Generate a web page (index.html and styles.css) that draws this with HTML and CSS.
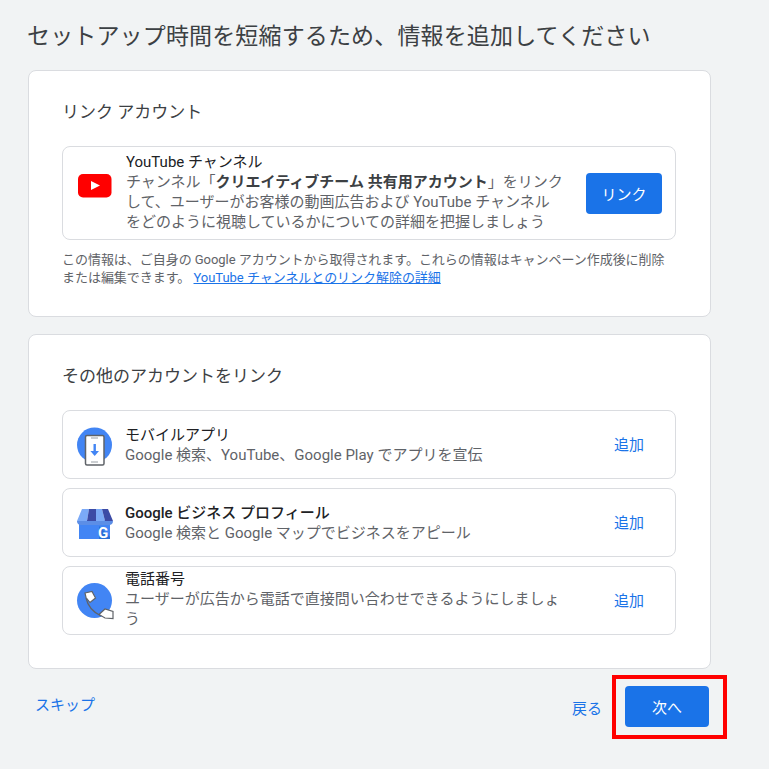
FILE: index.html
```html
<!DOCTYPE html>
<html lang="ja">
<head>
<meta charset="utf-8">
<title>セットアップ</title>
<link rel="stylesheet" href="styles.css">
</head>
<body>
<main class="page">
  <h1 class="title">セットアップ時間を短縮するため、情報を追加してください</h1>
  <section class="card card-first">
    <h2 class="card-title">リンク アカウント</h2>
    <div class="row row-yt">
      <svg class="icon-yt" viewBox="0 0 34 24" width="34" height="24"><rect x="0" y="0" width="33.500" height="23.500" rx="5" fill="#f00"/><path fill="#fff" d="M13 7l9 4.500-9 4.500z"/></svg>
      <div class="row-text">
        <div class="row-name">YouTube チャンネル</div>
        <div class="row-desc">チャンネル「<b>クリエイティブチーム 共有用アカウント</b>」をリンクして、ユーザーがお客様の動画広告および YouTube チャンネルをどのように視聴しているかについての詳細を把握しましょう</div>
      </div>
      <button class="btn btn-link">リンク</button>
    </div>
    <p class="note">この情報は、ご自身の Google アカウントから取得されます。これらの情報はキャンペーン作成後に削除または編集できます。 <a href="#">YouTube チャンネルとのリンク解除の詳細</a></p>
  </section>
  <section class="card card-second">
    <h2 class="card-title">その他のアカウントをリンク</h2>
    <div class="rows">
      <div class="row">
        <svg class="icon" viewBox="0 -2 46 46" width="46" height="46"><circle cx="22.500" cy="21" r="17.500" fill="#4285f4"/><rect x="13.500" y="11.500" width="18.500" height="29.500" rx="1.500" fill="#fff" stroke="#5f6368" stroke-width="1.500"/><path d="M19 14h7M19 38h7" stroke="#9aa0a6" stroke-width="1.200"/><path fill="#4285f4" d="M21.500 20h2.400v7h3.100l-4.300 5-4.300-5h3.100z"/></svg>
        <div class="row-text"><div class="row-name">モバイルアプリ</div><div class="row-desc">Google 検索、YouTube、Google Play でアプリを宣伝</div></div>
        <a class="add" href="#">追加</a>
      </div>
      <div class="row">
        <svg class="icon" viewBox="0 -2 46 46" width="46" height="46"><path fill="#4285f4" d="M7 18h31v19H7z"/><path fill="#2a6fd6" d="M27 24l11 11v2H27z"/><path fill="#7baaf7" d="M10 7h7l-2 12H5z"/><path fill="#3c4ba6" d="M17 7h7v12h-9z"/><path fill="#7baaf7" d="M24 7h6l3 12h-9z"/><path fill="#3c4ba6" d="M30 7h6l5 12h-8z"/><path fill="#5c8ee6" d="M5 19h36c0 2.500-1.500 4-4 4H9c-2.500 0-4-1.500-4-4z"/><text class="g-mark" x="31" y="36">G</text></svg>
        <div class="row-text"><div class="row-name name-strong">Google ビジネス プロフィール</div><div class="row-desc">Google 検索と Google マップでビジネスをアピール</div></div>
        <a class="add" href="#">追加</a>
      </div>
      <div class="row">
        <svg class="icon" viewBox="0 0 46 46" width="46" height="46"><circle cx="22.500" cy="22.500" r="17.500" fill="#4285f4"/><path fill="none" stroke="#5f6368" stroke-width="1.200" d="M14 20c1.500 7 7 14 15 18"/><path fill="#fff" stroke="#5f6368" stroke-width="1.200" d="M13 15l7-1.500 3.500 6.500-5.500 4.500-4-5zM27 36.500l6-5.500 8 2.500v7l-8-.5z"/></svg>
        <div class="row-text row-text-long"><div class="row-name">電話番号</div><div class="row-desc">ユーザーが広告から電話で直接問い合わせできるようにしましょう</div></div>
        <a class="add" href="#">追加</a>
      </div>
    </div>
  </section>
  <footer class="footer">
    <a class="skip" href="#">スキップ</a>
    <div class="footer-right">
      <a class="back" href="#">戻る</a>
      <div class="highlight"><button class="btn btn-next">次へ</button></div>
    </div>
  </footer>
</main>
</body>
</html>
```

FILE: styles.css
```css
* { box-sizing: border-box; }
html, body { margin: 0; height: 100%; }
body {
  background: #f1f3f4;
  font-family: "Roboto", "Noto Sans CJK JP", sans-serif;
  color: #3c4043;
  overflow: hidden;
}
.page { width: 769px; padding: 22px 58px 0 28px; }
.title {
  margin: 0 0 18px -1px;
  font-size: 23px;
  letter-spacing: .15px;
  line-height: 30px;
  font-weight: 400;
  color: #3c4043;
  white-space: nowrap;
}
.card {
  background: #fff;
  border: 1px solid #dadce0;
  border-radius: 8px;
  padding: 0 34px 0 33px;
}
.card-first { height: 247px; padding-top: 29px; margin-bottom: 17px; }
.card-second { height: 335px; padding-top: 29px; }
.card-title {
  margin: 0;
  font-size: 17px;
  line-height: 24px;
  font-weight: 400;
  color: #3c4043;
}
.card-first .card-title { margin-bottom: 22px; }
.card-second .card-title { margin-bottom: 22px; }
.rows { display: flex; flex-direction: column; gap: 9px; }
.row {
  display: flex;
  align-items: center;
  height: 69px;
  border: 1px solid #dadce0;
  border-radius: 8px;
  padding: 0 14px;
}
.row-yt { height: 94px; padding-right: 13px; }
.icon { flex: none; margin: 1px 7px 0 -5px; }
.icon-yt { flex: none; margin: -14px 14px 0 1px; }
.row-text { flex: 1; min-width: 0; padding: 0 50px 0 0; }
.row-text-long { padding-bottom: 3px; }
.row-yt .row-text { padding: 0 22px 2px 0; }
.row-name { font-size: 15px; line-height: 20px; color: #202124; }
.name-strong { font-weight: 500; }
.row-desc { font-size: 15px; line-height: 20px; color: #5f6368; }
.row-desc b { font-weight: 700; color: #3c4043; }
.btn {
  border: 0;
  border-radius: 4px;
  background: #1a73e8;
  color: #fff;
  font-family: inherit;
  font-size: 15px;
}
.btn-link { flex: none; width: 76px; height: 41px; }
.add {
  flex: none;
  width: 32px;
  margin: 0 15px 3px 0;
  font-size: 15px;
  color: #1a73e8;
  text-decoration: none;
}
.note {
  margin: 11px 0 0;
  font-size: 13px;
  letter-spacing: -.04px;
  line-height: 18px;
  color: #5f6368;
}
.note a { color: #1a73e8; }
.g-mark { font-family: "Roboto", sans-serif; font-size: 15px; font-weight: 700; fill: #fff; text-anchor: middle; }
.footer {
  display: flex;
  justify-content: space-between;
  align-items: center;
  margin-top: 6px;
}
.footer-right { display: flex; align-items: center; }
.skip, .back { font-size: 15px; color: #1a73e8; text-decoration: none; }
.skip { margin-left: 7px; margin-top: -7px; }
.back { margin-right: 10px; }
.highlight {
  border: 4px solid #f00;
  width: 115px;
  height: 64px;
  margin-right: -16px;
  padding: 7px 0 0 9px;
}
.btn-next { display: block; width: 84px; height: 41px; }
```
